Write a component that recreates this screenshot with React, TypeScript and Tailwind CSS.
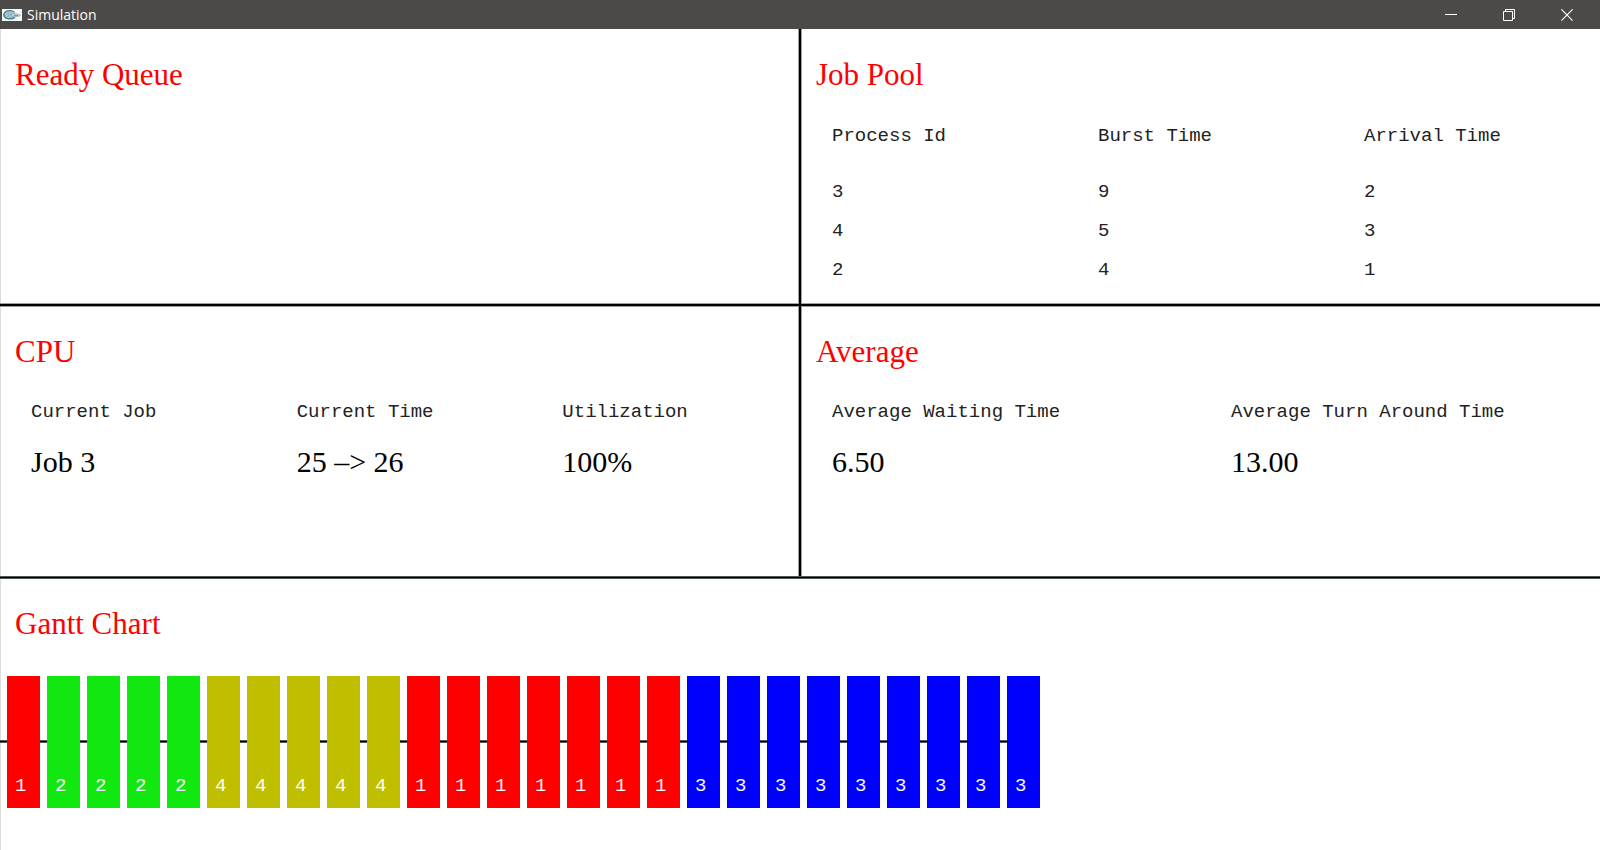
import type { ReactNode } from "react";

const serif = "font-['Liberation_Serif',serif]";
const mono = "font-['Liberation_Mono',monospace] text-[19px] leading-6";

const jobs = [
  { id: 3, burst: 9, arrival: 2 },
  { id: 4, burst: 5, arrival: 3 },
  { id: 2, burst: 4, arrival: 1 },
];

const timeline = [
  1, 2, 2, 2, 2, 4, 4, 4, 4, 4, 1, 1, 1, 1, 1, 1, 1, 3, 3, 3, 3, 3, 3, 3, 3, 3,
];

const jobColors: Record<number, string> = {
  1: "bg-[#ff0000]",
  2: "bg-[#10e810]",
  3: "bg-[#0000ff]",
  4: "bg-[#bfbf00]",
};

function Heading({ children }: { children: ReactNode }) {
  return (
    <h2 className={`${serif} pl-[14px] text-[31px] leading-9 text-[#ff0000]`}>
      {children}
    </h2>
  );
}

function Stat({ label, value }: { label: string; value: string }) {
  return (
    <div className="flex-1 pl-[30px]">
      <dt className={`${mono} text-[#222]`}>{label}</dt>
      <dd className={`${serif} mt-5 text-[30px] leading-9`}>{value}</dd>
    </div>
  );
}

function AppIcon() {
  return (
    <svg width="20" height="12" viewBox="0 0 20 12" aria-hidden="true">
      <rect width="20" height="12" fill="#f4f8f9" />
      <ellipse cx="7.5" cy="6" rx="6" ry="4" fill="#a9c9ce" />
      <path
        d="M12.5 3.4C10.5 1.2 4.6 1 2.6 3.6C.6 6.4 2.8 9.4 6.6 9.8C9 10 11.4 9.4 13 8.4"
        fill="none"
        stroke="#3d7f8a"
        strokeWidth="1.3"
      />
      <path
        d="M4.5 6.2C6 3.6 9 3.8 11 5C14 4.6 17 5.4 18.5 6.4C16 7.8 13 8 11 7.6C9 8.4 6 8.4 4.5 6.2Z"
        fill="#c4d9dd"
        stroke="#7ba3ab"
        strokeWidth=".7"
      />
      <path d="M6 6h4M12 6.4h4" stroke="#5f8d97" strokeWidth=".9" />
    </svg>
  );
}

function WindowButton({ label, children }: { label: string; children: ReactNode }) {
  return (
    <button type="button" aria-label={label} className="flex h-full w-[58px] items-center justify-center">
      <svg width="12" height="12" viewBox="0 0 12 12" fill="none" stroke="#fff" aria-hidden="true">
        {children}
      </svg>
    </button>
  );
}

function TitleBar() {
  return (
    <header className="flex h-[29px] items-center bg-[#4c4a48] pr-1 pl-[2px] text-white">
      <AppIcon />
      <h1 className="ml-[5px] flex-1 font-['Open_Sans','Noto_Sans',sans-serif] text-[14px] leading-5">
        Simulation
      </h1>
      <WindowButton label="Minimize">
        <path d="M0 5.5h12" />
      </WindowButton>
      <WindowButton label="Restore">
        <path d="M.5 2.5h9v9h-9zM2.5 2.5v-2h9v9h-2" />
      </WindowButton>
      <WindowButton label="Close">
        <path d="M.4.4l11.2 11.2M11.6.4L.4 11.6" strokeWidth="1.2" />
      </WindowButton>
    </header>
  );
}

export default function App() {
  return (
    <div className="flex min-h-screen flex-col bg-white text-black">
      <TitleBar />
      <main className="flex-1 shadow-[inset_1px_0_#dcdcdc]">
        <div className="grid grid-cols-[1fr_4px_1fr]">
          <section className="pt-7 pl-px">
            <Heading>Ready Queue</Heading>
          </section>
          <div className="z-10 -mb-px border-x border-[#a0a0a0] bg-black" />
          <section className="pt-7 pb-[14px]">
            <Heading>Job Pool</Heading>
            <table className={`${mono} mt-[31px] w-full table-fixed text-left text-[#222]`}>
              <thead>
                <tr>
                  <th className="pb-6 pl-[30px] font-normal">Process Id</th>
                  <th className="pb-6 pl-[30px] font-normal">Burst Time</th>
                  <th className="pb-6 pl-[30px] font-normal">Arrival Time</th>
                </tr>
              </thead>
              <tbody>
                {jobs.map((job) => (
                  <tr key={job.id} className="h-[39px]">
                    <td className="pl-[30px]">{job.id}</td>
                    <td className="pl-[30px]">{job.burst}</td>
                    <td className="pl-[30px]">{job.arrival}</td>
                  </tr>
                ))}
              </tbody>
            </table>
          </section>
        </div>
        <div className="h-1 border-y border-[#a0a0a0] bg-black" />
        <div className="grid grid-cols-[1fr_4px_1fr]">
          <section className="pt-[27px] pb-24 pl-px">
            <Heading>CPU</Heading>
            <dl className="mt-[30px] flex">
              <Stat label="Current Job" value="Job 3" />
              <Stat label="Current Time" value="25 –> 26" />
              <Stat label="Utilization" value="100%" />
            </dl>
          </section>
          <div className="z-10 -mt-px border-x border-[#a0a0a0] bg-black" />
          <section className="pt-[27px] pb-24">
            <Heading>Average</Heading>
            <dl className="mt-[30px] flex">
              <Stat label="Average Waiting Time" value="6.50" />
              <Stat label="Average Turn Around Time" value="13.00" />
            </dl>
          </section>
        </div>
        <div className="h-[3px] border-y border-[#505858] bg-black" />
        <section className="pt-[27px] pb-10">
          <div className="pl-px">
            <Heading>Gantt Chart</Heading>
          </div>
          <div className="relative mt-[34px] flex w-fit gap-[7px] pl-[7px]">
            <div className="absolute inset-x-0 top-16 h-[3px] border-y border-[#505858] bg-black" />
            {timeline.map((id, tick) => (
              <div
                key={tick}
                className={`${mono} ${jobColors[id]} relative flex h-[132px] w-[33px] items-end pb-[10px] pl-2 text-white`}
              >
                {id}
              </div>
            ))}
          </div>
        </section>
      </main>
    </div>
  );
}
